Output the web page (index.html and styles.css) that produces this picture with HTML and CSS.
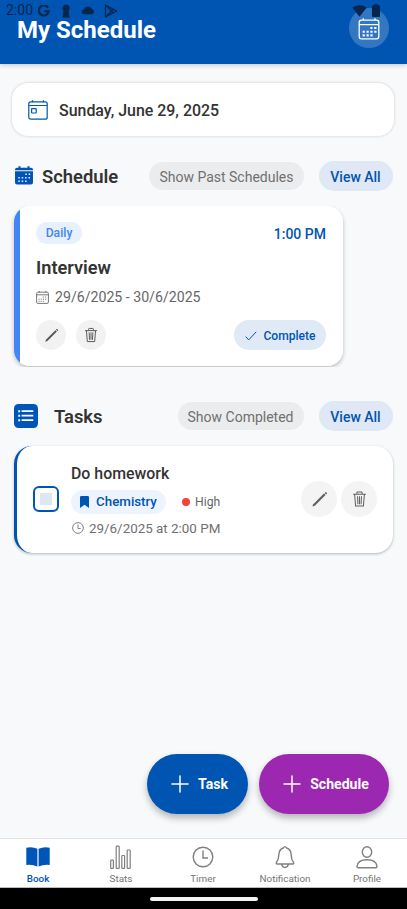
FILE: index.html
```html
<!DOCTYPE html>
<html lang="en">
<head>
<meta charset="utf-8">
<title>My Schedule</title>
<link rel="stylesheet" href="styles.css">
</head>
<body>
<svg class="defs" aria-hidden="true">
  <symbol id="pencil" viewBox="0 0 16 16"><path d="M1.300 14.700l.8-2.300L12.200 2.300l1.500 1.500L3.600 13.900z" fill="currentColor"/><path d="M12.700 1.800l1.500 1.500.7-.7q.4-.6-.2-1.100t-1.200-.4z" fill="currentColor"/></symbol>
  <symbol id="trash" viewBox="0 0 16 18"><path d="M1.200 4h13.600M2.800 4l1 12.500h8.400L13.200 4M5.200 3.800V2.400q0-.9.9-.9h3.800q.9 0 .9.900v1.400M5.900 6l.4 8.500M8 6v8.500M10.100 6l-.4 8.500" fill="none" stroke="currentColor" stroke-width="1.100"/></symbol>
  <symbol id="plus" viewBox="0 0 18 18"><path d="M9 1v16M1 9h16" stroke="currentColor" stroke-width="1.5" stroke-linecap="round"/></symbol>
  <symbol id="clock" viewBox="0 0 22 22"><circle cx="11" cy="11" r="9.8"/><path d="M11 4.5V12h5"/></symbol>
</svg>
<div class="screen">
  <header class="header">
    <h1>My Schedule</h1>
    <div class="round-button">
      <svg width="22" height="22" viewBox="0 0 22 22" fill="none" stroke="#fff" stroke-width="1.3"><rect x="1.2" y="2.2" width="19.6" height="18.6" rx="2.2"/><path d="M1.2 6.6h19.6M5.3 .3v2M17 .3v2"/><path d="M12.300 10h6.200M4.600 13.700h14M4.600 17.400h10" stroke-width="2.100" stroke-dasharray="2.2 1.7"/></svg>
    </div>
    <div class="status">
      <span>2:00</span>
      <svg class="g" width="12" height="12" viewBox="0 0 12 12"><path d="M10 2.7A5 5 0 1 0 10.8 6.2H6.2" fill="none" stroke="currentColor" stroke-width="2.2"/></svg>
      <svg class="key" width="8" height="14" viewBox="0 0 8 14"><path d="M4 .5a3.6 3.6 0 0 1 2.6 6.2L7.6 13.5H.4l1-6.8A3.6 3.6 0 0 1 4 .5z" fill="currentColor"/></svg>
      <svg class="cloud" width="14" height="9" viewBox="0 0 14 9"><path d="M3 8.200a2.300 2.300 0 0 1-.2-4.600 4.300 4.300 0 0 1 8-.6 2.700 2.700 0 0 1 .4 5.200z" fill="currentColor"/></svg>
      <svg class="play" width="14" height="14" viewBox="0 0 14 14"><path d="M1.5 1.1v11.8L12.6 7zM1.5 1.1l7.7 7.7M1.5 12.9l7.7-7.7" fill="none" stroke="currentColor" stroke-width="1.3"/></svg>
      <svg class="wifi" width="15" height="12" viewBox="0 0 15 12"><path d="M.3 2.6Q7.5-2.2 14.7 2.6L7.5 11.8z" fill="currentColor"/></svg>
      <svg class="battery" width="8" height="13" viewBox="0 0 8 13"><path d="M2.2 0h3.6v1.2H7q1 0 1 1V12q0 1-1 1H1q-1 0-1-1V2.2q0-1 1-1h1.2z" fill="currentColor"/></svg>
    </div>
  </header>

  <main>
    <section class="date-card">
      <svg width="20" height="20" viewBox="0 0 20 20" fill="none" stroke="#0055b8" stroke-width="1.2"><rect x=".8" y="1.8" width="18.4" height="17.4" rx="2"/><path d="M.8 5.5h18.4M4.5 .2v2M15.5 .2v2"/><rect x="3.6" y="8.6" width="4.6" height="4.4" rx=".5"/></svg>
      <span>Sunday, June 29, 2025</span>
    </section>

    <div class="section-head">
      <svg width="18" height="19" viewBox="0 0 18 19"><path d="M2 1.8h1.5V.3h2v1.5h7V.3h2v1.5H16q2 0 2 1.7v.8H0V3.5q0-1.700 2-1.700zM0 5.300h18v11.200q0 2-2 2H2q-2 0-2-2z" fill="#0055b8"/><path d="M10.300 8.300h5M3.300 11.800h12M3.300 15.200h8.700" stroke="#e7f0fb" stroke-width="1.500" stroke-dasharray="1.5 1.9"/></svg>
      <h2>Schedule</h2>
      <span class="pill-gray">Show Past Schedules</span>
      <span class="pill-blue">View All</span>
    </div>

    <div class="event-clip">
      <article class="event">
        <div class="row"><span class="tag">Daily</span><span class="time">1:00 PM</span></div>
        <h3>Interview</h3>
        <div class="meta">
          <svg width="13" height="13" viewBox="0 0 13 13" fill="none" stroke="#666" stroke-width=".9"><rect x=".6" y="1.2" width="11.8" height="11.2" rx="1.2"/><path d="M.6 3.8h11.8M3.2 0v1.4M9.8 0v1.4"/><path d="M6.8 6h4M2.5 8.2h8.3M2.5 10.3h6" stroke-dasharray="1.1 1.1"/></svg>
          <span>29/6/2025 - 30/6/2025</span>
        </div>
        <div class="row actions">
          <span class="icon-btn"><svg width="15" height="15"><use href="#pencil"/></svg></span>
          <span class="icon-btn"><svg width="14" height="16"><use href="#trash"/></svg></span>
          <span class="complete"><svg width="12" height="10" viewBox="0 0 12 10"><path d="M.7 5.6l3 3.3L11.2.8" fill="none" stroke="currentColor" stroke-width="1"/></svg>Complete</span>
        </div>
      </article>
    </div>

    <div class="section-head tasks-head">
      <svg width="24" height="24" viewBox="0 0 24 24"><rect width="24" height="24" rx="4.5" fill="#0055b8"/><path d="M7.600 7.200h11.700M7.600 11.700h11.700M7.600 16.200h11.700" stroke="#fff" stroke-width="1.700"/><path d="M4.200 7.200h1.900M4.200 11.700h1.900M4.200 16.200h1.900" stroke="#fff" stroke-width="1.900"/></svg>
      <h2>Tasks</h2>
      <span class="pill-gray">Show Completed</span>
      <span class="pill-blue">View All</span>
    </div>

    <article class="task">
      <span class="checkbox"></span>
      <div class="task-body">
        <h4>Do homework</h4>
        <div class="labels">
          <span class="subject"><svg width="9" height="12" viewBox="0 0 9 12"><path d="M0 1.2Q0 0 1.2 0h6.6Q9 0 9 1.2V12L4.5 8.7 0 12z" fill="currentColor"/></svg>Chemistry</span>
          <span class="dot"></span><span class="priority">High</span>
        </div>
        <div class="due"><svg class="line" width="12" height="12"><use href="#clock"/></svg><span>29/6/2025 at 2:00 PM</span></div>
      </div>
      <span class="icon-btn big"><svg width="17" height="17"><use href="#pencil"/></svg></span>
      <span class="icon-btn big"><svg width="15" height="18"><use href="#trash"/></svg></span>
    </article>
  </main>

  <div class="fabs">
    <span class="fab task-fab"><svg width="18" height="18"><use href="#plus"/></svg>Task</span>
    <span class="fab schedule-fab"><svg width="18" height="18"><use href="#plus"/></svg>Schedule</span>
  </div>

  <nav class="tabs">
    <div class="tab active"><svg width="24" height="24" viewBox="0 0 24 24"><path d="M.3 2.7Q6.5 1.500 11.400 3.800v17.800Q6.500 19.200 .3 19.900zM23.700 2.700Q17.500 1.500 12.600 3.800v17.800q4.900-2.400 11.100-1.700z" fill="#0055b8"/></svg><span>Book</span></div>
    <div class="tab"><svg width="24" height="24" viewBox="0 0 24 24" fill="none" stroke="#808080" stroke-width="1.2"><rect x="1.700" y="15.200" width="2.700" height="8.200" rx=".7"/><rect x="7.200" y="1.200" width="3" height="22.200" rx=".7"/><rect x="12.800" y="10.500" width="2.800" height="12.900" rx=".7"/><rect x="18.200" y="5" width="3" height="18.400" rx=".7"/></svg><span>Stats</span></div>
    <div class="tab"><svg class="line" width="22" height="24"><use href="#clock"/></svg><span>Timer</span></div>
    <div class="tab"><svg width="20" height="24" viewBox="0 0 20 24" fill="none" stroke="#808080" stroke-width="1.4"><path d="M8.4 3Q10 .3 11.6 3c3.6 1 4.5 4 4.6 7 .1 4 .8 5.5 2.1 7 1 1.2.4 2-.6 2H2.3c-1 0-1.6-.8-.6-2 1.3-1.5 2-3 2.1-7 .1-3 1-6 4.6-7zM6.8 19.2c.2 4.2 6.200 4.200 6.400 0"/></svg><span>Notification</span></div>
    <div class="tab"><svg width="22" height="24" viewBox="0 0 22 24" fill="none" stroke="#808080" stroke-width="1.4"><ellipse cx="11" cy="7" rx="4.700" ry="5.300"/><path d="M1 21.300c.5-4.500 5-6.600 10-6.600s9.500 2.100 10 6.600q0 1.500-1.200 1.500H2.200Q1 22.800 1 21.300z"/></svg><span>Profile</span></div>
  </nav>
  <footer class="system-bar"><span></span></footer>
</div>
</body>
</html>
```
FILE: styles.css
```css
* { box-sizing: border-box; }
body { margin: 0; background: #f8f9fb; color: #333; font-family: Roboto, sans-serif; }
h1, h2, h3, h4 { margin: 0; font-weight: 600; white-space: nowrap; }
svg { display: block; flex: none; }
.defs { position: absolute; width: 0; height: 0; }
.screen { position: relative; width: 407px; height: 909px; overflow: hidden; display: flex; flex-direction: column; }
.header { position: relative; flex: none; height: 64px; padding: 8px 18px 0 17px; background: #0055b3; display: flex; justify-content: space-between; align-items: flex-start; box-shadow: 0 1px 5px rgba(0,0,0,.22); }
h1 { color: #fff; font-size: 24px; line-height: 28px; font-weight: 700; margin-top: 8px; }
.round-button { width: 40px; height: 40px; border-radius: 50%; background: #3377c3; display: flex; align-items: center; justify-content: center; }
.round-button svg { margin-top: 1px; }
.status { position: absolute; left: 6px; top: 3px; right: 27px; height: 15px; display: flex; align-items: center; color: #06264e; font-size: 14px; line-height: 15px; }
.status span { width: 27px; }
.g { margin-left: 5px; }
.key { margin-left: 12px; }
.cloud { margin-left: 11px; }
.play { margin-left: 9px; }
.wifi { margin-left: auto; }
.battery { margin-left: 5px; }
main { flex: 1; padding: 19px 12px 0; }
.date-card { height: 53px; margin-right: 1px; padding-left: 16px; display: flex; align-items: center; gap: 11px; background: #fff; border-radius: 16px; box-shadow: 0 0 3px rgba(0,0,0,.2); font-size: 15.950px; font-weight: 500; }
.date-card span { padding-top: 2px; }
.section-head { display: flex; align-items: center; height: 30px; margin: 25px 2.500px 0 3px; }
.section-head > svg { margin-bottom: 1px; }
h2 { margin-left: 9px; font-size: 18.400px; line-height: 24px; padding-top: 1px; }
.pill-gray, .pill-blue { display: flex; align-items: center; justify-content: center; white-space: nowrap; border-radius: 15px; }
.pill-gray { margin-left: auto; height: 28px; padding: 1px 10px 0; color: #707070; background: #ebeced; font-size: 14px; }
.pill-blue { margin-left: 15px; width: 74px; height: 30px; padding-top: 1px; color: #0055b3; background: #dfe8f4; font-size: 14px; font-weight: 500; }
.event-clip { height: 161px; margin: 15px 0 0 -6px; padding-left: 8px; overflow: hidden; }
.event { width: 329px; height: 160px; padding: 16px 17px 0 22px; background: linear-gradient(to right, #4285f4 6px, #fff 6px); border-radius: 16px; box-shadow: 0 2px 4px rgba(0,0,0,.25); }
.row { display: flex; align-items: center; justify-content: space-between; }
.tag { width: 46px; height: 22px; border-radius: 11px; background: #e8f0fe; color: #4285f4; font-size: 12.200px; line-height: 23px; font-weight: 500; text-align: center; }
.time { padding-top: 1px; color: #0055b3; font-size: 14px; font-weight: 500; }
h3 { margin-top: 13px; font-size: 18.200px; line-height: 22px; }
.meta { display: flex; align-items: center; gap: 6px; margin-top: 9px; height: 18px; color: #666; font-size: 14.150px; }
.actions { margin-top: 14px; gap: 10px; }
.icon-btn { width: 30px; height: 30px; border-radius: 50%; background: #f2f2f2; color: #555; display: flex; align-items: center; justify-content: center; }
.complete { margin-left: auto; width: 92px; height: 30px; border-radius: 15px; background: #e0eaf6; color: #0055b3; display: flex; align-items: center; justify-content: center; gap: 6px; font-size: 12.100px; font-weight: 500; padding: 1px 0 0 1px; }
.tasks-head { margin: 34px 2.500px 0 2px; }
.tasks-head h2 { margin-left: 16px; }
.task { height: 107px; margin: 15px 2px 0; padding: 0 16px; display: flex; align-items: center; background: #fff; border-left: 3px solid #0055b3; border-radius: 18px; box-shadow: 0 1px 3px rgba(0,0,0,.28); }
.checkbox { width: 26px; height: 26px; margin: -2px 0 0; border: 2px solid #0055b3; border-radius: 6px; padding: 5px; background: #dde7f4 content-box; flex: none; }
.task-body { flex: 1; margin: 1px 0 0 12px; }
h4 { font-size: 15.900px; line-height: 20px; font-weight: 500; }
.labels { display: flex; align-items: center; margin-top: 6px; height: 24px; }
.subject { width: 95px; height: 24px; border-radius: 12px; background: #edf4fe; color: #0055b3; display: flex; align-items: center; justify-content: center; gap: 7px; font-size: 13.300px; font-weight: 500; }
.dot { width: 8px; height: 8px; margin-left: 16px; border-radius: 50%; background: #f44336; }
.priority { margin-left: 5px; padding-top: 1px; color: #666; font-size: 12.200px; }
.due { display: flex; align-items: center; gap: 5px; margin: 5px 0 0 1px; height: 18px; color: #707070; font-size: 13.400px; white-space: nowrap; }
.due span { padding-top: 2px; }
.line { fill: none; stroke: #808080; stroke-width: 1.400; }
.due .line { stroke-width: 1.800; }
.big { width: 36px; height: 36px; margin-top: -1px; background: #f4f4f4; color: #606060; flex: none; }
.big + .big { margin-left: 4px; }
.fabs { flex: none; display: flex; justify-content: flex-end; gap: 11px; padding: 0 18px 24px 0; }
.fab { height: 60px; border-radius: 30px; color: #fff; display: flex; align-items: center; justify-content: center; gap: 9px; font-size: 14.100px; font-weight: 700; box-shadow: 0 4px 7px rgba(0,0,0,.28); }
.fab svg { margin-left: 4px; }
.task-fab { width: 101px; background: #0055b3; }
.schedule-fab { width: 130px; background: #9c27b0; }
.tabs { flex: none; height: 50px; border-top: 1px solid #e1e3e6; border-bottom: 1px solid #bbb; background: #fff; display: flex; }
.tab { flex: none; width: 82px; padding-top: 6px; display: flex; flex-direction: column; align-items: center; gap: 4px; color: #757575; font-size: 9.900px; line-height: 12px; font-weight: 400; }
.tab:first-child { width: 76px; margin-right: 4px; font-weight: 500; }
.active { color: #0055b3; }
.system-bar { flex: none; height: 21px; background: #000; display: flex; align-items: center; justify-content: center; }
.system-bar span { width: 108px; height: 4px; border-radius: 2px; background: #f4f4f4; margin-bottom: -1px; }
```
